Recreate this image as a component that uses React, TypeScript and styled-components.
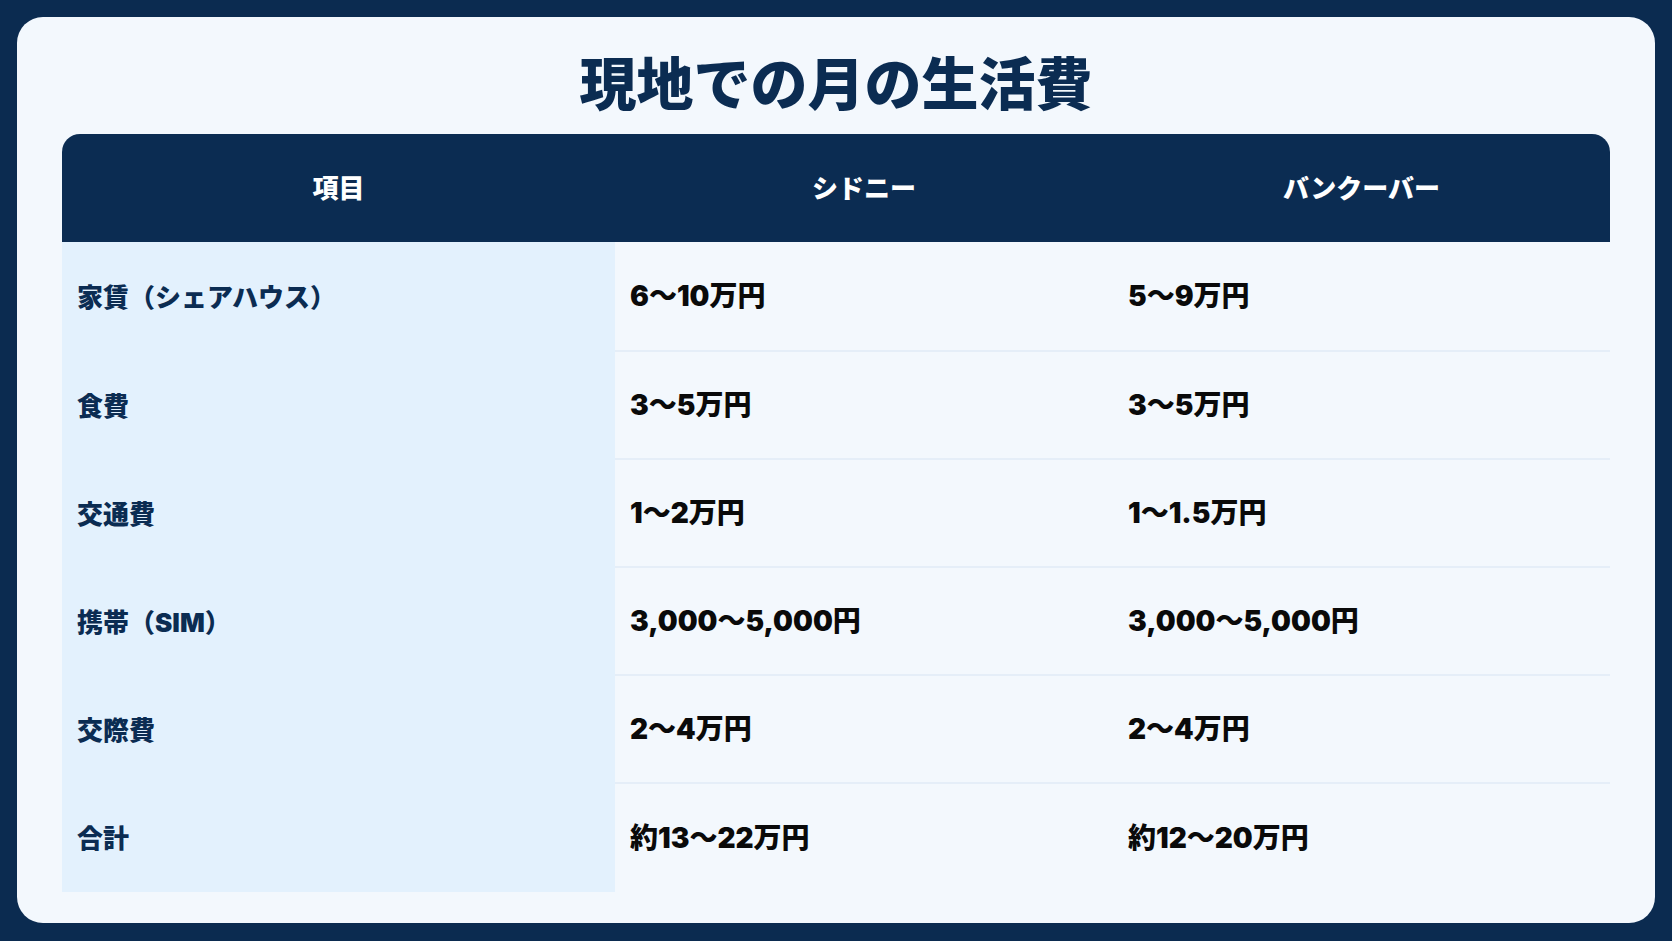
import styled, { createGlobalStyle } from 'styled-components';

const ROWS = [
  { label: '家賃（シェアハウス）', sydney: '6〜10万円', vancouver: '5〜9万円' },
  { label: '食費', sydney: '3〜5万円', vancouver: '3〜5万円' },
  { label: '交通費', sydney: '1〜2万円', vancouver: '1〜1.5万円' },
  { label: '携帯（SIM）', sydney: '3,000〜5,000円', vancouver: '3,000〜5,000円' },
  { label: '交際費', sydney: '2〜4万円', vancouver: '2〜4万円' },
  { label: '合計', sydney: '約13〜22万円', vancouver: '約12〜20万円' },
];

const COLUMNS = [
  { title: '項目', width: 553 },
  { title: 'シドニー', width: 498 },
  { title: 'バンクーバー', width: 497 },
];

const App = () => {
  return (
    <>
      <GlobalStyle />
      <Page>
        <Card>
          <Title>現地での月の生活費</Title>
          <CostTable>
            <colgroup>
              {COLUMNS.map((col) => (
                <col key={col.title} style={{ width: col.width }} />
              ))}
            </colgroup>
            <thead>
              <tr>
                {COLUMNS.map((col) => (
                  <HeadCell key={col.title}>{col.title}</HeadCell>
                ))}
              </tr>
            </thead>
            <tbody>
              {ROWS.map((row, index) => (
                <tr key={row.label}>
                  <LabelCell $first={index === 0}>{row.label}</LabelCell>
                  <ValueCell $first={index === 0} $last={index === ROWS.length - 1}>
                    {row.sydney}
                  </ValueCell>
                  <ValueCell $first={index === 0} $last={index === ROWS.length - 1}>
                    {row.vancouver}
                  </ValueCell>
                </tr>
              ))}
            </tbody>
          </CostTable>
        </Card>
      </Page>
    </>
  );
};

export default App;

const GlobalStyle = createGlobalStyle`
  html, body {
    margin: 0;
    padding: 0;
    background-color: #0b2b50;
  }
  * {
    box-sizing: border-box;
  }
`;

const FONT = `'Inter', 'Noto Sans CJK JP', sans-serif`;

export const Page = styled.div`
  width: 1672px;
  height: 941px;
  padding: 17px 17px 18px;
  background-color: #0b2b50;
  display: flex;
`;

export const Card = styled.div`
  flex: 1;
  background-color: #f3f8fd;
  border-radius: 26px;
  padding: 22px 45px 30px;
  display: flex;
  flex-direction: column;
  align-items: stretch;
`;

export const Title = styled.h1`
  margin: 0 0 12px;
  text-align: center;
  font-family: 'Noto Sans CJK JP', sans-serif;
  font-weight: 900;
  font-size: 57px;
  line-height: 83px;
  color: #0b2c52;
`;

export const CostTable = styled.table`
  width: 1548px;
  table-layout: fixed;
  border-collapse: separate;
  border-spacing: 0;
  font-family: ${FONT};
`;

export const HeadCell = styled.th`
  height: 108px;
  padding: 0 15px 4px;
  background-color: #0b2c52;
  color: #ffffff;
  font-weight: 900;
  font-size: 26px;
  text-align: center;
  vertical-align: middle;

  &:first-child {
    border-top-left-radius: 18px;
  }
  &:last-child {
    border-top-right-radius: 18px;
  }
`;

export const LabelCell = styled.td<{ $first?: boolean }>`
  height: ${({ $first }) => ($first ? '110px' : '108px')};
  padding: 0 15px 4px;
  background-color: #e3f1fd;
  color: #0b2c52;
  font-weight: 900;
  font-size: 26px;
  vertical-align: middle;
`;

export const ValueCell = styled.td<{ $first?: boolean; $last?: boolean }>`
  height: ${({ $first }) => ($first ? '110px' : '108px')};
  padding: 0 15px 4px;
  background-color: #f3f8fd;
  color: #0a0a0a;
  font-weight: 900;
  font-size: 28px;
  vertical-align: middle;
  border-bottom: ${({ $last }) => ($last ? 'none' : '2px solid #e5eef8')};
`;
